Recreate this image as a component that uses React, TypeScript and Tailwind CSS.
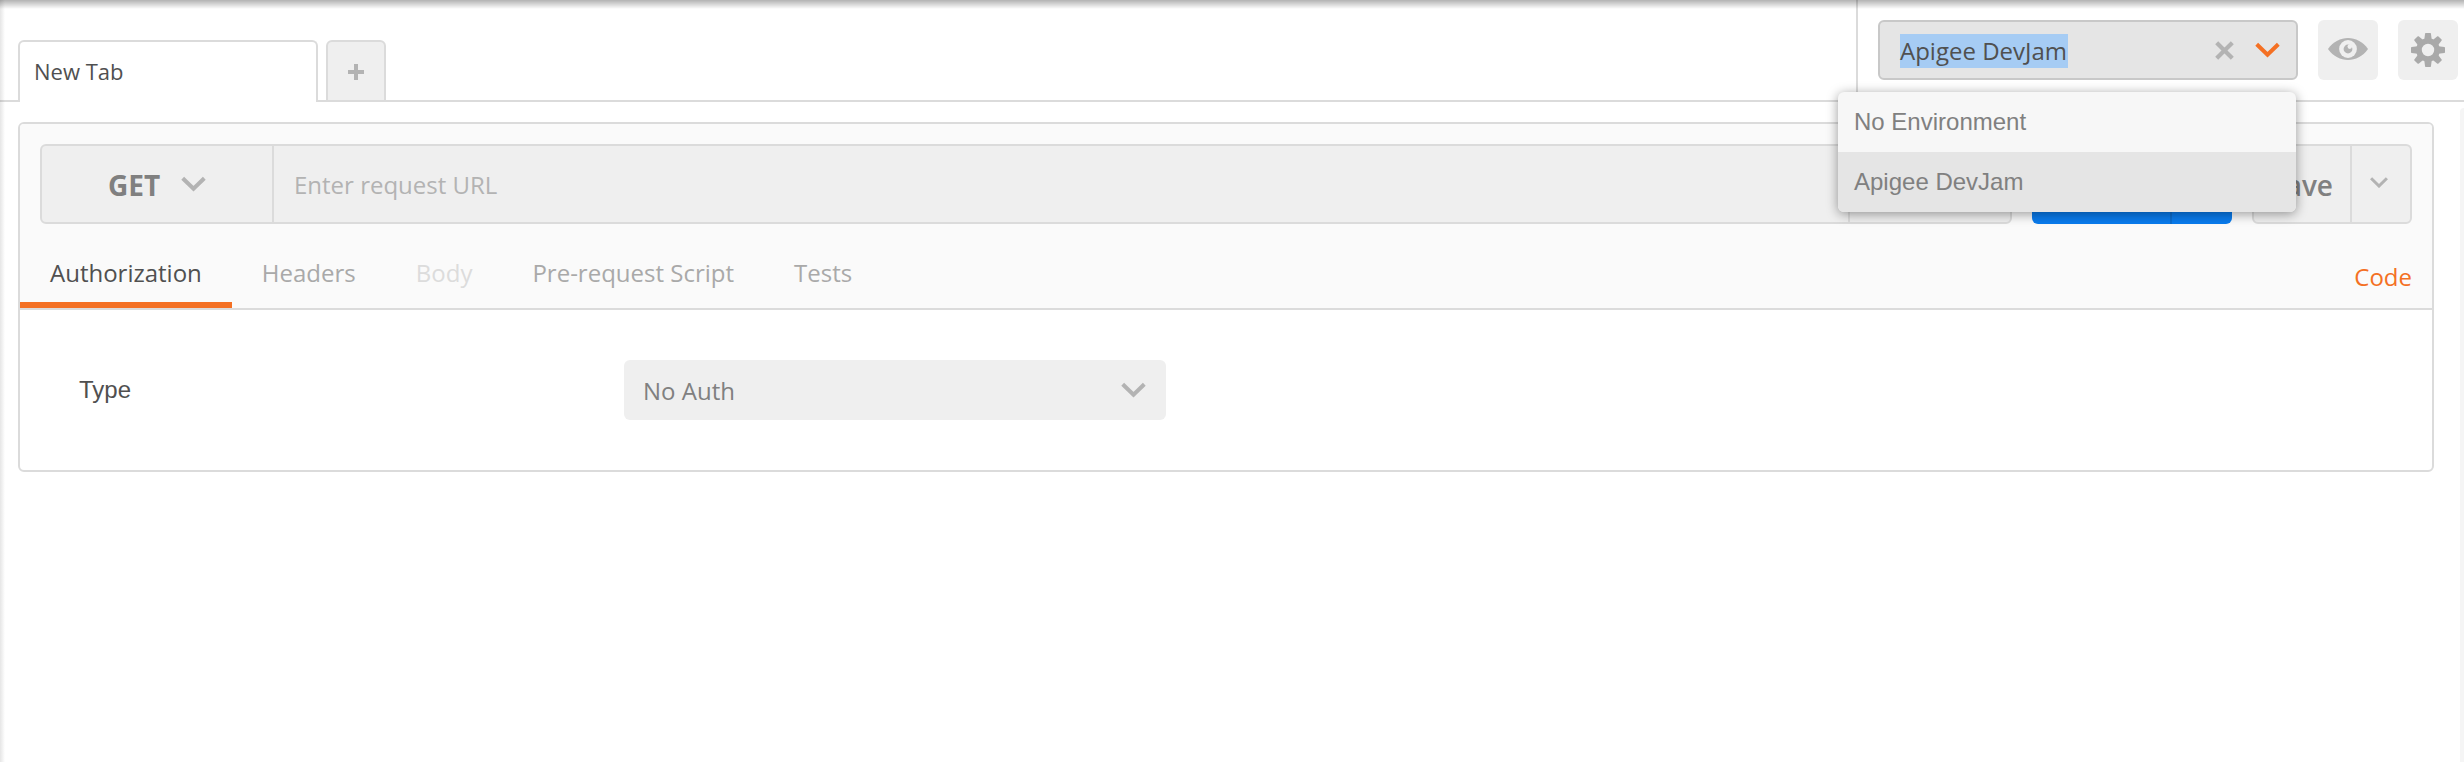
import React from "react";

function Chevron({ className = "" }: { className?: string }) {
  return (
    <svg width="25" height="16" viewBox="0 0 25 16" fill="none" className={`shrink-0 ${className}`}>
      <path d="M1.700 2.200 12.500 12.700 23.300 2.200" stroke="currentColor" strokeWidth="4" />
    </svg>
  );
}

function EyeIcon() {
  return (
    <svg width="40" height="24" viewBox="0 0 40 24" className="text-[#b3b3b3]">
      <path d="M0 12C5.500 4.500 12.500 1 20 1S34.500 4.500 40 12C34.500 19.500 27.500 23 20 23S5.500 19.500 0 12Z" fill="currentColor" />
      <circle cx="20" cy="12" r="8.900" fill="#efefef" />
      <circle cx="20" cy="12" r="4.400" fill="currentColor" />
      <circle cx="21.800" cy="9.600" r="2.300" fill="#efefef" />
    </svg>
  );
}

const teeth = [0, 45, 90, 135, 180, 225, 270, 315];

function GearIcon() {
  return (
    <svg width="34" height="34" viewBox="-17 -17 34 34" className="text-[#a9a9a9]">
      <circle r="9" fill="none" stroke="currentColor" strokeWidth="5.600" />
      {teeth.map((a) => (
        <path key={a} d="M-3.700-10.500-3-16.300Q-2.900-17-2.200-17H2.200Q2.900-17 3-16.300L3.700-10.500Z" fill="currentColor" transform={`rotate(${a})`} />
      ))}
    </svg>
  );
}

function TopBar() {
  return (
    <header className="flex h-[102px] shrink-0">
      <div className="w-[18px] border-b-2 border-[#dbdbdb]" />
      <div className="mt-10 flex w-[300px] items-center rounded-t-md border-2 border-b-0 border-[#dbdbdb] bg-white pb-px pl-[14px] text-[22px] text-[#505050]">
        New Tab
      </div>
      <div className="w-2 border-b-2 border-[#dbdbdb]" />
      <div className="mt-10 flex w-[60px] items-center justify-center rounded-t-md border-2 border-[#dbdbdb] bg-[#efefef] text-[#b3b3b3]">
        <svg width="16" height="16" viewBox="0 0 16 16" className="mt-0.5">
          <path d="M6 0h4v6h6v4h-6v6H6v-6H0V6h6z" fill="currentColor" />
        </svg>
      </div>
      <div className="flex-1 border-b-2 border-[#dbdbdb]" />
      <div className="flex w-[608px] border-b-2 border-l-2 border-[#dbdbdb] pt-5 pl-5">
        <div className="relative flex h-[60px] w-[420px] items-center rounded-md border-2 border-[#c8c8c8] bg-[#e5e5e5] pr-4 pl-5">
          <span className="mt-0.5 h-[34px] bg-[#a6ccf4] pr-px leading-[34px] text-[#505050]">Apigee DevJam</span>
          <svg width="19" height="19" viewBox="0 0 19 19" className="ml-auto text-[#b3b3b3]">
            <path d="M1.700 1.700 17.300 17.300M17.300 1.700 1.700 17.300" stroke="currentColor" strokeWidth="4.200" />
          </svg>
          <Chevron className="ml-[21px] text-[#f47023]" />
          <div className="absolute top-[70px] left-[-42px] z-20 w-[458px] rounded-md bg-[#f7f7f7] font-['Liberation_Sans',Arial,sans-serif] text-[#808080] shadow-[0_2px_12px_rgba(0,0,0,0.4)]">
            <div className="h-[60px] pl-4 leading-[60px]">No Environment</div>
            <div className="h-[60px] rounded-b-md bg-[#e5e5e5] pl-4 leading-[60px]">Apigee DevJam</div>
          </div>
        </div>
        <div className="ml-5 flex size-[60px] items-center justify-center rounded-md bg-[#efefef] pb-[2px]">
          <EyeIcon />
        </div>
        <div className="ml-5 flex size-[60px] items-center justify-center rounded-md bg-[#efefef]">
          <GearIcon />
        </div>
      </div>
    </header>
  );
}

function RequestRow() {
  return (
    <div className="flex h-20 shrink-0 gap-5 px-5">
      <div className="flex flex-1 overflow-hidden rounded-md border-2 border-[#dbdbdb] bg-[#efefef]">
        <div className="flex w-[232px] items-center border-r-2 border-[#dbdbdb] pl-[66px] text-[28px] font-bold text-[#808080]">
          <span className="mt-0.5">GET</span>
          <Chevron className="ml-[21px] text-[#b3b3b3]" />
        </div>
        <div className="flex flex-1 items-center pt-0.5 pl-5 text-[#b3b3b3]">Enter request URL</div>
        <div className="w-[162px] border-l-2 border-[#dbdbdb]" />
      </div>
      <div className="flex w-[200px] overflow-hidden rounded-md bg-[#097bed]">
        <div className="w-[140px] border-r-2 border-[#0a6dd0]" />
      </div>
      <div className="flex w-40 overflow-hidden rounded-md border-2 border-[#dbdbdb] bg-[#efefef] text-[#808080]">
        <div className="flex w-[98px] items-center justify-end border-r-2 border-[#dbdbdb] pt-0.5 pr-[17px] text-[28px] font-semibold">
          Save
        </div>
        <div className="flex flex-1 items-center justify-center pr-1 text-[#b3b3b3]">
          <svg width="18" height="11" viewBox="0 0 18 11" fill="none" className="-mt-1">
            <path d="M1.100 1.200 9 9 16.900 1.200" stroke="currentColor" strokeWidth="3" />
          </svg>
        </div>
      </div>
    </div>
  );
}

function RequestPanel() {
  return (
    <section className="mt-5 mr-[30px] ml-[18px] h-[350px] overflow-hidden rounded-md border-2 border-[#dbdbdb]">
      <div className="flex h-[186px] flex-col border-b-2 border-[#dbdbdb] bg-[#fafafa] pt-5">
        <RequestRow />
        <nav className="flex flex-1 items-stretch leading-10 text-[#a9a9a9]">
          <div className="border-b-[6px] border-[#f47023] px-[30px] pt-[29px] text-[#505050]">Authorization</div>
          <div className="px-[30px] pt-[29px]">Headers</div>
          <div className="px-[30px] pt-[29px] text-[#dcdcdc]">Body</div>
          <div className="px-[30px] pt-[29px]">Pre-request Script</div>
          <div className="px-[30px] pt-[29px]">Tests</div>
          <div className="ml-auto pt-[33px] pr-5 text-[#f47023]">Code</div>
        </nav>
      </div>
      <div className="flex pt-[50px] pl-[60px]">
        <div className="-ml-px w-[545px] font-['Liberation_Sans',Arial,sans-serif] leading-[60px] text-[#505050]">Type</div>
        <div className="flex h-[60px] w-[542px] items-center justify-between rounded-md bg-[#efefef] pr-5 pl-[19px] text-[#808080]">
          <span className="mt-0.5">No Auth</span>
          <Chevron className="text-[#b3b3b3]" />
        </div>
      </div>
    </section>
  );
}

export default function App() {
  return (
    <div className="relative flex h-[762px] w-[2464px] flex-col overflow-hidden bg-white font-['Open_Sans',sans-serif] text-[24px]">
      <TopBar />
      <RequestPanel />
      <div className="pointer-events-none absolute inset-y-0 left-0 w-[5px] bg-linear-to-r from-black/10 to-transparent" />
      <div className="pointer-events-none absolute inset-x-0 top-0 h-[9px] bg-linear-to-b from-black/30 to-transparent" />
      <div className="absolute top-[108px] right-0 bottom-0 w-1 rounded-tl-md bg-[#f5f5f5]" />
    </div>
  );
}
